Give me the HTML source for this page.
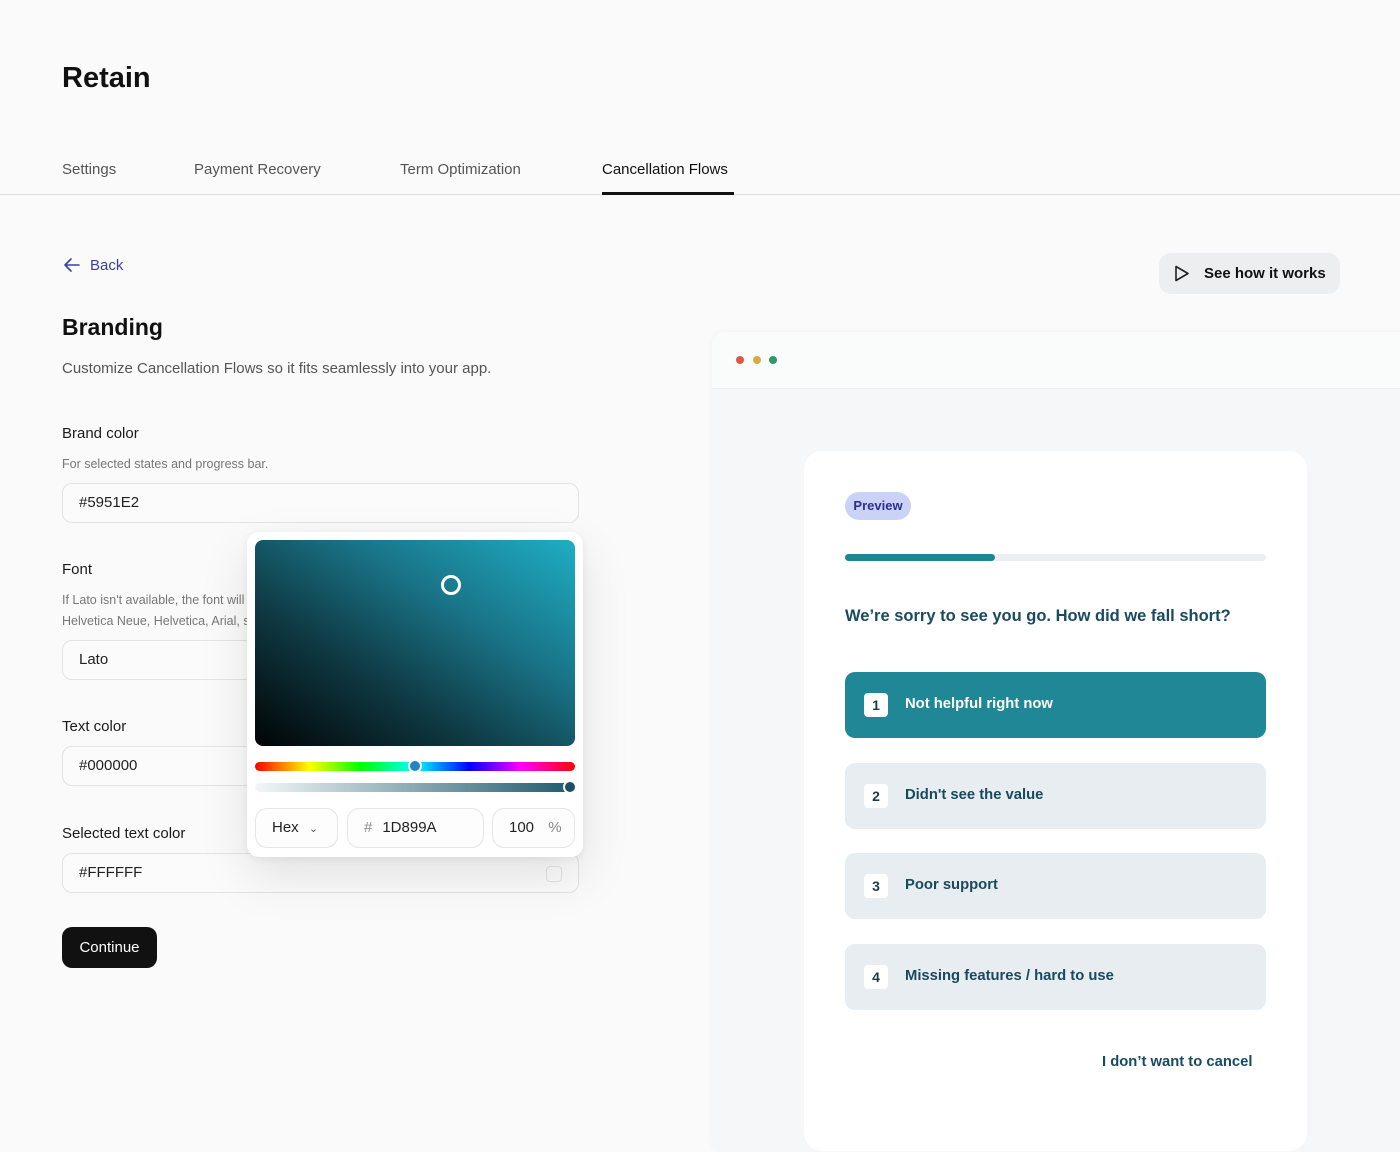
<!DOCTYPE html>
<html><head><style>
*{box-sizing:border-box;margin:0;padding:0}
body{width:1400px;height:1134px;background:#fafafa;font-family:"Liberation Sans",sans-serif;position:relative;overflow:hidden;color:#111}
.a{position:absolute}
.inp{position:absolute;left:62px;width:517px;height:40px;border:1px solid #e3e3e3;border-radius:10px;background:#fbfbfb;padding-left:16px;line-height:38px;font-size:15px;color:#222}
.lbl{position:absolute;left:62px;font-size:15px;color:#1a1a1a}
.sub{position:absolute;left:62px;font-size:12.5px;color:#777}
.opt{position:absolute;left:845px;width:421px;height:66px;border-radius:10px;background:#e7edf0;font-weight:bold;font-size:14.8px;color:#184a5e}
.opt .n{position:absolute;left:19px;top:21px;width:24px;height:24px;background:#fff;border-radius:4px;text-align:center;line-height:24px;font-size:14px;color:#1c3c4c}
.opt .t{position:absolute;left:60px;top:24px}
.sm{position:absolute;top:276px;height:40px;border:1px solid #e5e5e5;border-radius:12px;background:#fdfdfd;line-height:38px;font-size:15px;color:#222}
.tab{position:absolute;top:161px;font-size:15px;color:#555}
</style></head><body>
<div class="a" style="left:62px;top:62px;font-size:29px;font-weight:bold">Retain</div>
<div class="tab" style="left:62px">Settings</div>
<div class="tab" style="left:194px">Payment Recovery</div>
<div class="tab" style="left:400px">Term Optimization</div>
<div class="tab" style="left:602px;color:#111">Cancellation Flows</div>
<div class="a" style="top:194px;left:0;width:1400px;height:1px;background:#dedede"></div>
<div class="a" style="top:192px;left:602px;width:132px;height:3px;background:#111"></div>

<svg class="a" style="left:62px;top:257px" width="20" height="16" viewBox="0 0 20 16"><path d="M17 8H3M9 2L3 8l6 6" fill="none" stroke="#3b3fa0" stroke-width="1.6" stroke-linecap="round" stroke-linejoin="round"/></svg>
<div class="a" style="left:90px;top:257px;font-size:15px;color:#3b3fa0">Back</div>
<div class="a" style="left:62px;top:314px;font-size:23px;font-weight:bold">Branding</div>
<div class="a" style="left:62px;top:360px;font-size:15px;color:#555">Customize Cancellation Flows so it fits seamlessly into your app.</div>

<div class="lbl" style="top:425px">Brand color</div>
<div class="sub" style="top:457px">For selected states and progress bar.</div>
<div class="inp" style="top:483px">#5951E2</div>
<div class="lbl" style="top:561px">Font</div>
<div class="sub" style="top:590px;line-height:21px">If Lato isn't available, the font will fall back to<br>Helvetica Neue, Helvetica, Arial, sans-serif.</div>
<div class="inp" style="top:640px">Lato</div>
<div class="lbl" style="top:718px">Text color</div>
<div class="inp" style="top:746px">#000000</div>
<div class="lbl" style="top:825px">Selected text color</div>
<div class="inp" style="top:853px">#FFFFFF<div class="a" style="right:16px;top:12px;width:16px;height:16px;border:1px solid #e3e3e3;border-radius:4px"></div></div>
<div class="a" style="left:62px;top:927px;width:95px;height:41px;background:#111;border-radius:10px;color:#fff;font-size:15px;text-align:center;line-height:41px">Continue</div>

<div class="a" style="left:247px;top:532px;width:336px;height:325px;background:#fff;border-radius:12px;box-shadow:0 20px 50px rgba(0,0,0,.10),0 2px 8px rgba(0,0,0,.06)">
 <div class="a" style="left:8px;top:8px;width:320px;height:206px;border-radius:8px;background:linear-gradient(to top right,#010405 0%,#0f3a44 35%,#1a7488 65%,#1eaec4 100%)">
  <div class="a" style="left:186px;top:35px;width:20px;height:20px;border:3px solid #fff;border-radius:50%"></div></div>
 <div class="a" style="left:8px;top:230px;width:320px;height:9px;border-radius:5px;background:linear-gradient(to right,#f00,#ff0 17%,#0f0 33%,#0ff 50%,#00f 67%,#f0f 83%,#f00)"></div>
 <div class="a" style="left:161px;top:227px;width:14px;height:14px;border-radius:50%;background:#1c86c8;border:2px solid #fff"></div>
 <div class="a" style="left:8px;top:251px;width:320px;height:9px;border-radius:5px;background:linear-gradient(to right,rgba(29,90,110,0.05),#1d5a6e)"></div>
 <div class="a" style="left:316px;top:248px;width:14px;height:14px;border-radius:50%;background:#1d4f66;border:2px solid #fff"></div>
 <div class="sm" style="left:8px;width:83px;padding-left:16px">Hex <span style="font-size:11px;color:#555;margin-left:6px">&#8964;</span></div>
 <div class="sm" style="left:100px;width:137px;padding-left:16px"><span style="color:#888;margin-right:10px">#</span>1D899A</div>
 <div class="sm" style="left:245px;width:83px;padding-left:16px">100 <span style="color:#888;margin-left:10px">%</span></div>
</div>

<div class="a" style="left:1159px;top:253px;width:181px;height:41px;background:#eceef0;border-radius:12px"></div>
<svg class="a" style="left:1173px;top:264px" width="18" height="19" viewBox="0 0 18 19"><path d="M3 2.5L15 9.5L3 16.5Z" fill="none" stroke="#222" stroke-width="1.6" stroke-linejoin="round"/></svg>
<div class="a" style="left:1204px;top:265px;font-size:15px;font-weight:bold;color:#111">See how it works</div>

<div class="a" style="left:712px;top:332px;width:720px;height:820px;background:#f5f7f8;border-radius:14px;box-shadow:0 0 8px rgba(0,0,0,.04)">
 <div class="a" style="left:0;top:0;width:100%;height:57px;background:#fafbfb;border-radius:14px 14px 0 0;border-bottom:1px solid #eef0f1"></div>
 <div class="a" style="left:24px;top:24px;width:8px;height:8px;border-radius:50%;background:#dc5a45"></div>
 <div class="a" style="left:41px;top:24px;width:8px;height:8px;border-radius:50%;background:#dcaa45"></div>
 <div class="a" style="left:57px;top:24px;width:8px;height:8px;border-radius:50%;background:#2a9a6a"></div>
</div>
<div class="a" style="left:804px;top:451px;width:503px;height:700px;background:#fff;border-radius:18px"></div>
<div class="a" style="left:845px;top:492px;width:66px;height:28px;background:#cad3f7;border-radius:14px;color:#2d2f8f;font-size:13px;font-weight:bold;text-align:center;line-height:28px">Preview</div>
<div class="a" style="left:845px;top:554px;width:421px;height:7px;background:#eceef0;border-radius:4px"></div>
<div class="a" style="left:845px;top:554px;width:150px;height:7px;background:#1d8696;border-radius:4px"></div>
<div class="a" style="left:845px;top:607px;font-size:16.5px;font-weight:bold;color:#194a60">We’re sorry to see you go. How did we fall short?</div>
<div class="opt" style="top:672px;background:#1f8796;color:#fff"><div class="n">1</div><div class="t">Not helpful right now</div></div>
<div class="opt" style="top:763px"><div class="n">2</div><div class="t">Didn't see the value</div></div>
<div class="opt" style="top:853px"><div class="n">3</div><div class="t">Poor support</div></div>
<div class="opt" style="top:944px"><div class="n">4</div><div class="t">Missing features / hard to use</div></div>
<div class="a" style="left:1102px;top:1054px;font-size:14.8px;font-weight:bold;color:#194a60">I don’t want to cancel</div>
</body></html>
